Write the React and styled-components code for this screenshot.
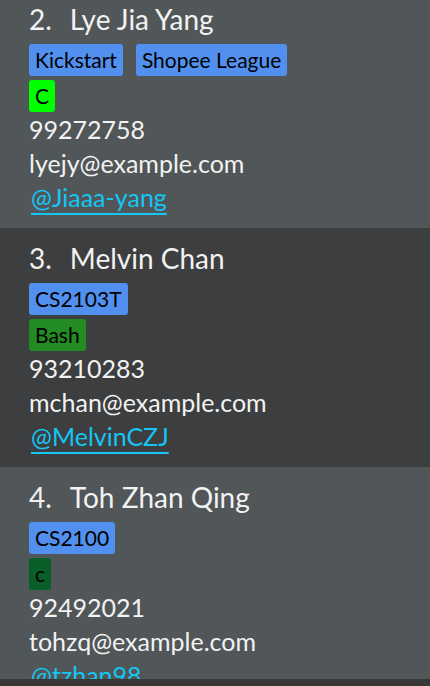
import React from "react";
import styled, { createGlobalStyle } from "styled-components";

const persons = [
  {
    id: 2,
    name: "Lye Jia Yang",
    modules: ["Kickstart", "Shopee League"],
    langs: [{ name: "C", color: "#00ff00" }],
    phone: "99272758",
    email: "lyejy@example.com",
    github: "@Jiaaa-yang",
  },
  {
    id: 3,
    name: "Melvin Chan",
    modules: ["CS2103T"],
    langs: [{ name: "Bash", color: "#228b22" }],
    phone: "93210283",
    email: "mchan@example.com",
    github: "@MelvinCZJ",
  },
  {
    id: 4,
    name: "Toh Zhan Qing",
    modules: ["CS2100"],
    langs: [{ name: "c", color: "#0a5e2a" }],
    phone: "92492021",
    email: "tohzq@example.com",
    github: "@tzhan98",
  },
];

const App = () => {
  return (
    <>
      <GlobalStyle />
      <Page>
        <Viewport>
          <List>
            {persons.map((p, i) => (
              <Card key={p.id} $odd={i % 2 === 0}>
                <Name>
                  <span>{p.id}.</span>
                  <span>{p.name}</span>
                </Name>
                <TagRow>
                  {p.modules.map((m) => (
                    <Tag key={m} $bg="#5290ef">{m}</Tag>
                  ))}
                </TagRow>
                <TagRow>
                  {p.langs.map((l) => (
                    <Tag key={l.name} $bg={l.color}>{l.name}</Tag>
                  ))}
                </TagRow>
                <Detail>{p.phone}</Detail>
                <Detail>{p.email}</Detail>
                <GithubLink href="#">{p.github}</GithubLink>
              </Card>
            ))}
          </List>
        </Viewport>
        <Footer />
      </Page>
    </>
  );
};

export default App;

const GlobalStyle = createGlobalStyle`
  html, body {
    margin: 0;
    padding: 0;
    background: #383838;
    overflow: hidden;
  }
  body {
    font-family: Lato, "Open Sans", sans-serif;
  }
`;

const Page = styled.div`
  width: 430px;
  height: 686px;
  display: flex;
  flex-direction: column;
  background: #383838;
`;

const Viewport = styled.div`
  height: 679px;
  overflow: hidden;
`;

const Footer = styled.div`
  flex: 1;
  background: #383838;
`;

const List = styled.div`
  display: flex;
  flex-direction: column;
  margin-top: -11px;
`;

const Card = styled.div`
  height: 239px;
  flex-shrink: 0;
  box-sizing: border-box;
  padding: 10px 0 0 29px;
  background: ${(props) => (props.$odd ? "#515658" : "#3c3e3f")};
  display: flex;
  flex-direction: column;
  align-items: flex-start;
  color: #f2f2f2;
`;

const Name = styled.div`
  display: flex;
  gap: 18px;
  font-size: 28px;
  line-height: 40px;
`;

const TagRow = styled.div`
  display: flex;
  flex-wrap: wrap;
  gap: 4px 13px;
  margin-top: 5px;
  & + & {
    margin-top: 4px;
  }
`;

const Tag = styled.span`
  background: ${(props) => props.$bg};
  color: #000;
  font-size: 21px;
  line-height: 24px;
  padding: 4px 6px;
  border-radius: 3px;
`;

const Detail = styled.div`
  font-size: 25px;
  line-height: 34px;
`;

const GithubLink = styled.a`
  font-size: 25px;
  line-height: 34px;
  color: #14c6f4;
  text-decoration: underline;
  text-decoration-thickness: 1.5px;
  text-underline-offset: 6px;
  margin-left: 2px;
`;
